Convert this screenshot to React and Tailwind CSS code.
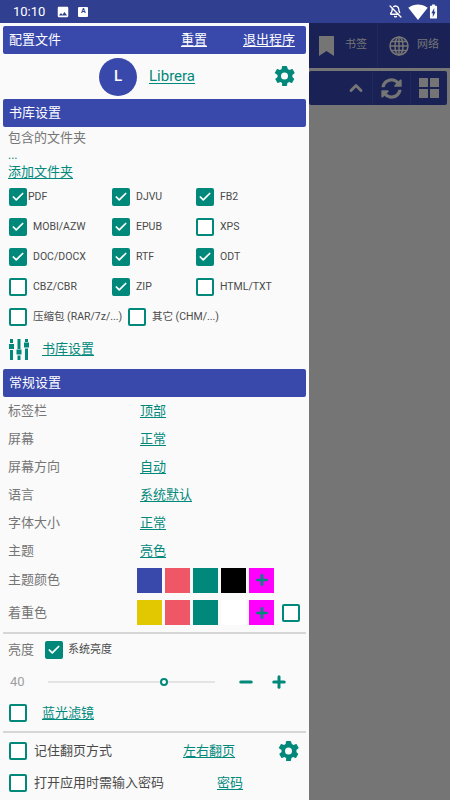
import { Check, Plus, Minus, ChevronUp, BellOff } from "lucide-react";
import { FaSyncAlt } from "react-icons/fa";

const cjk = { fontFamily: 'Roboto, "Noto Sans CJK SC", sans-serif' };

function Gear({ size = 20 }) {
  return (
    <svg width={size} height={size} viewBox="0 0 24 24" fill="#00897b">
      <path d="M19.4 13c.04-.32.1-.65.1-1s-.06-.68-.1-1l2.1-1.65c.2-.15.25-.42.13-.64l-2-3.46c-.12-.22-.4-.3-.6-.22l-2.5 1c-.52-.4-1.08-.73-1.7-.98L14 2.42A.5.5 0 0 0 13.5 2h-4a.5.5 0 0 0-.5.42l-.37 2.65c-.62.25-1.18.58-1.7.98l-2.5-1c-.22-.08-.48 0-.6.22l-2 3.46c-.13.22-.07.49.12.64L4.57 11c-.04.32-.07.66-.07 1s.03.68.07 1l-2.11 1.65c-.19.15-.25.42-.12.64l2 3.46c.12.22.38.3.6.22l2.5-1c.52.4 1.08.73 1.7.98L9 21.58c.04.24.25.42.5.42h4c.25 0 .46-.18.5-.42l.37-2.65c.62-.25 1.18-.58 1.7-.98l2.5 1c.22.08.48 0 .6-.22l2-3.46c.12-.22.07-.49-.13-.64L19.4 13zM11.5 15.5a3.5 3.5 0 1 1 0-7 3.5 3.5 0 0 1 0 7z" />
    </svg>
  );
}

function Box({ on, className = "" }) {
  return (
    <span className={`flex h-[18px] w-[18px] shrink-0 items-center justify-center rounded-[2px] border-2 border-[#00897b] ${on ? "bg-[#00897b]" : "bg-white"} ${className}`}>
      {on && <Check size={14} strokeWidth={3} color="white" />}
    </span>
  );
}

function Format({ label, on, gap = "ml-[6px]", width = "" }) {
  return (
    <div className={`flex items-center ${width}`}>
      <Box on={on} />
      <span className={`whitespace-nowrap text-[10.5px] text-[#4a4a4a] ${gap}`}>{label}</span>
    </div>
  );
}

function Bar({ children }) {
  return (
    <div className="mx-[3px] flex h-[28px] shrink-0 items-center justify-between rounded-[2px] bg-[#3949ab] pl-[6px] pr-[11px] text-[13px] text-white">
      {children}
    </div>
  );
}

function Link({ children, className = "" }) {
  return <span className={`text-[13px] text-[#00897b] underline underline-offset-2 ${className}`}>{children}</span>;
}

function Swatch({ color, plus }) {
  return (
    <span className={`flex h-[25px] w-[25px] items-center justify-center ${color}`}>
      {plus && <Plus size={16} strokeWidth={4} color="#00897b" />}
    </span>
  );
}

const settings = [
  ["标签栏", "顶部"],
  ["屏幕", "正常"],
  ["屏幕方向", "自动"],
  ["语言", "系统默认"],
  ["字体大小", "正常"],
  ["主题", "亮色"],
];

export default function App() {
  return (
    <div className="flex h-[800px] w-[450px] flex-col overflow-hidden bg-[#757575]" style={cjk}>
      <div className="flex h-[23px] shrink-0 items-center bg-[#303f8f] pl-[13px] pr-[8px] text-white">
        <span className="text-[13px]">10:10</span>
        <svg width="14" height="14" viewBox="0 0 24 24" fill="white" className="ml-[11px]">
          <path d="M21 19V5c0-1.100-.9-2-2-2H5c-1.100 0-2 .9-2 2v14c0 1.100.9 2 2 2h14c1.100 0 2-.9 2-2zM8.500 13.500l2.500 3.010L14.500 12l4.500 6H5l3.500-4.500z" />
        </svg>
        <span className="ml-[8px] flex h-[10px] w-[10px] items-center justify-center rounded-[1px] bg-white text-[7px] font-bold leading-none text-[#303f8f]">A</span>
        <BellOff size={13} strokeWidth={2.5} className="ml-auto" />
        <svg width="20" height="20" viewBox="0 0 24 24" fill="white" className="ml-[6px]">
          <path d="M12.010 21.490L23.640 7c-.45-.34-4.930-4-11.640-4C5.280 3 .81 6.660.36 7l11.630 14.490.01.01.01-.01z" />
        </svg>
        <svg width="17" height="17" viewBox="0 0 24 24" fill="white" className="-ml-[3px]">
          <path d="M15.670 4H14V2h-4v2H8.330C7.600 4 7 4.600 7 5.330v15.330C7 21.400 7.600 22 8.330 22h7.330c.74 0 1.340-.6 1.340-1.330V5.330C17 4.600 16.400 4 15.670 4zM11 20v-5.500H9L13 7v5.500h2L11 20z" />
        </svg>
      </div>

      <div className="flex flex-1 overflow-hidden">
        <aside className="flex w-[309px] shrink-0 flex-col bg-[#fafafa] pt-[3px]">
          <Bar>
            <span>配置文件</span>
            <span className="ml-auto underline underline-offset-2">重置</span>
            <span className="ml-[36px] underline underline-offset-2">退出程序</span>
          </Bar>

          <div className="relative flex h-[45px] shrink-0 items-center pl-[99px]">
            <span className="flex h-[38px] w-[38px] items-center justify-center rounded-full bg-[#3949ab] text-[15px] font-medium text-white">L</span>
            <Link className="ml-[12px] text-[15px]">Librera</Link>
            <span className="absolute right-[12px] top-[10px]"><Gear size={24} /></span>
          </div>

          <Bar>书库设置</Bar>

          <div className="flex shrink-0 flex-col px-[8px] pt-[1px]">
            <span className="text-[13px] leading-[20px] text-[#757575]">包含的文件夹</span>
            <span className="text-[12px] leading-[14px] text-[#00897b]">...</span>
            <Link className="leading-[19px]">添加文件夹</Link>
          </div>

          <div className="mt-[7px] flex shrink-0 flex-col gap-[12px] pl-[9px]">
            <div className="flex"><Format label="PDF" on gap="ml-[1px]" width="w-[103px]" /><Format label="DJVU" on width="w-[84px]" /><Format label="FB2" on /></div>
            <div className="flex"><Format label="MOBI/AZW" on width="w-[103px]" /><Format label="EPUB" on width="w-[84px]" /><Format label="XPS" /></div>
            <div className="flex"><Format label="DOC/DOCX" on width="w-[103px]" /><Format label="RTF" on width="w-[84px]" /><Format label="ODT" on /></div>
            <div className="flex"><Format label="CBZ/CBR" width="w-[103px]" /><Format label="ZIP" on width="w-[84px]" /><Format label="HTML/TXT" /></div>
            <div className="flex"><Format label="压缩包 (RAR/7z/...)" width="w-[119px]" /><Format label="其它 (CHM/...)" /></div>
          </div>

          <div className="mt-[11px] flex h-[24px] shrink-0 items-center pl-[9px]">
            <svg width="21" height="21" viewBox="0 0 21 21" fill="#00897b">
              <path d="M1 0h3v4H1zM0 5h5v5H0zM1 11h3v10H1zM8.500 0h3v10h-3zM7.500 10.500h5v5h-5zM8.500 16.500h3v4.500h-3zM16 0h3v3h-3zM15 3.500h5v5h-5zM16 9.500h3V21h-3z" />
            </svg>
            <Link className="ml-[12px]">书库设置</Link>
          </div>

          <div className="mt-[8px] shrink-0"><Bar>常规设置</Bar></div>

          <div className="flex shrink-0 flex-col px-[8px]">
            {settings.map(([name, value]) => (
              <div key={name} className="flex h-[28px] items-center">
                <span className="w-[132px] text-[13px] text-[#757575]">{name}</span>
                <Link>{value}</Link>
              </div>
            ))}
            <div className="flex h-[30px] items-center">
              <span className="w-[129px] text-[13px] text-[#757575]">主题颜色</span>
              <div className="flex gap-[3px]">
                <Swatch color="bg-[#3949ab]" />
                <Swatch color="bg-[#ef5666]" />
                <Swatch color="bg-[#00897b]" />
                <Swatch color="bg-black" />
                <Swatch color="bg-[#ff00ff]" plus />
              </div>
            </div>
            <div className="flex h-[35px] items-center">
              <span className="w-[129px] text-[13px] text-[#757575]">着重色</span>
              <div className="flex gap-[3px]">
                <Swatch color="bg-[#e2c800]" />
                <Swatch color="bg-[#ef5666]" />
                <Swatch color="bg-[#00897b]" />
                <Swatch color="bg-white" />
                <Swatch color="bg-[#ff00ff]" plus />
              </div>
              <Box className="ml-[8px]" />
            </div>
          </div>

          <div className="mx-[3px] mt-[2px] h-[2px] shrink-0 bg-[#d6d6d6]" />

          <div className="mt-[2px] flex h-[28px] shrink-0 items-center pl-[8px]">
            <span className="text-[13px] text-[#757575]">亮度</span>
            <Box on className="ml-[11px]" />
            <span className="ml-[5px] text-[11px] text-[#4a4a4a]">系统亮度</span>
          </div>

          <div className="mt-[4px] flex h-[28px] shrink-0 items-center pl-[10px]">
            <span className="w-[38px] text-[13px] text-[#9e9e9e]">40</span>
            <div className="relative h-[2px] w-[167px] bg-[#e4e4e4]">
              <span className="absolute left-[112px] top-[-3px] h-[8px] w-[8px] rounded-full border-2 border-[#00897b] bg-white" />
            </div>
            <Minus size={18} strokeWidth={4} color="#00897b" className="ml-[22px]" />
            <Plus size={18} strokeWidth={4} color="#00897b" className="ml-[15px]" />
          </div>

          <div className="mt-[3px] flex h-[28px] shrink-0 items-center pl-[9px]">
            <Box />
            <Link className="ml-[15px]">蓝光滤镜</Link>
          </div>

          <div className="mx-[3px] mt-[4px] h-[2px] shrink-0 bg-[#d6d6d6]" />

          <div className="mt-[2px] flex h-[32px] shrink-0 items-center pl-[9px]">
            <Box />
            <span className="ml-[7px] w-[149px] text-[13px] text-[#4a4a4a]">记住翻页方式</span>
            <Link className="w-[94px]">左右翻页</Link>
            <Gear size={24} />
          </div>

          <div className="flex h-[32px] shrink-0 items-center pl-[9px]">
            <Box />
            <span className="ml-[7px] w-[183px] text-[13px] text-[#4a4a4a]">打开应用时需输入密码</span>
            <Link>密码</Link>
          </div>
        </aside>

        <main className="flex-1 overflow-hidden">
          <div className="flex h-[45px] items-center bg-[#1a2155] text-[#757575]">
            <div className="flex h-full w-[69px] items-center border-r border-[#202860] pl-[10px]">
              <svg width="15" height="20" viewBox="0 0 15 20" fill="#757575"><path d="M0 0h15v20l-7.500-5L0 20z" /></svg>
              <span className="ml-[11px] text-[11px]">书签</span>
            </div>
            <div className="flex items-center pl-[11px]">
              <svg width="20" height="20" viewBox="0 0 20 20" fill="none" stroke="#757575" strokeWidth="1.500">
                <circle cx="10" cy="10" r="9" />
                <ellipse cx="10" cy="10" rx="4" ry="9" />
                <path d="M10 1v18M1 10h18M2.500 5.500h15M2.500 14.500h15" />
              </svg>
              <span className="ml-[8px] text-[11px]">网络</span>
            </div>
          </div>
          <div className="mt-[3px] flex h-[34px] w-[138px] items-center justify-end rounded-[2px] bg-[#1a2155] text-[#757575]">
            <ChevronUp size={20} strokeWidth={3.5} className="mr-[6px]" />
            <div className="flex h-full w-[38px] items-center justify-center border-l border-[#202860]">
              <FaSyncAlt size={21} />
            </div>
            <div className="flex h-full w-[37px] items-center justify-center border-l border-[#202860]">
              <svg width="20" height="20" viewBox="0 0 20 20" fill="#757575">
                <path d="M0 0h9v9H0zM11 0h9v9h-9zM0 11h9v9H0zM11 11h9v9h-9z" />
              </svg>
            </div>
          </div>
        </main>
      </div>
    </div>
  );
}
